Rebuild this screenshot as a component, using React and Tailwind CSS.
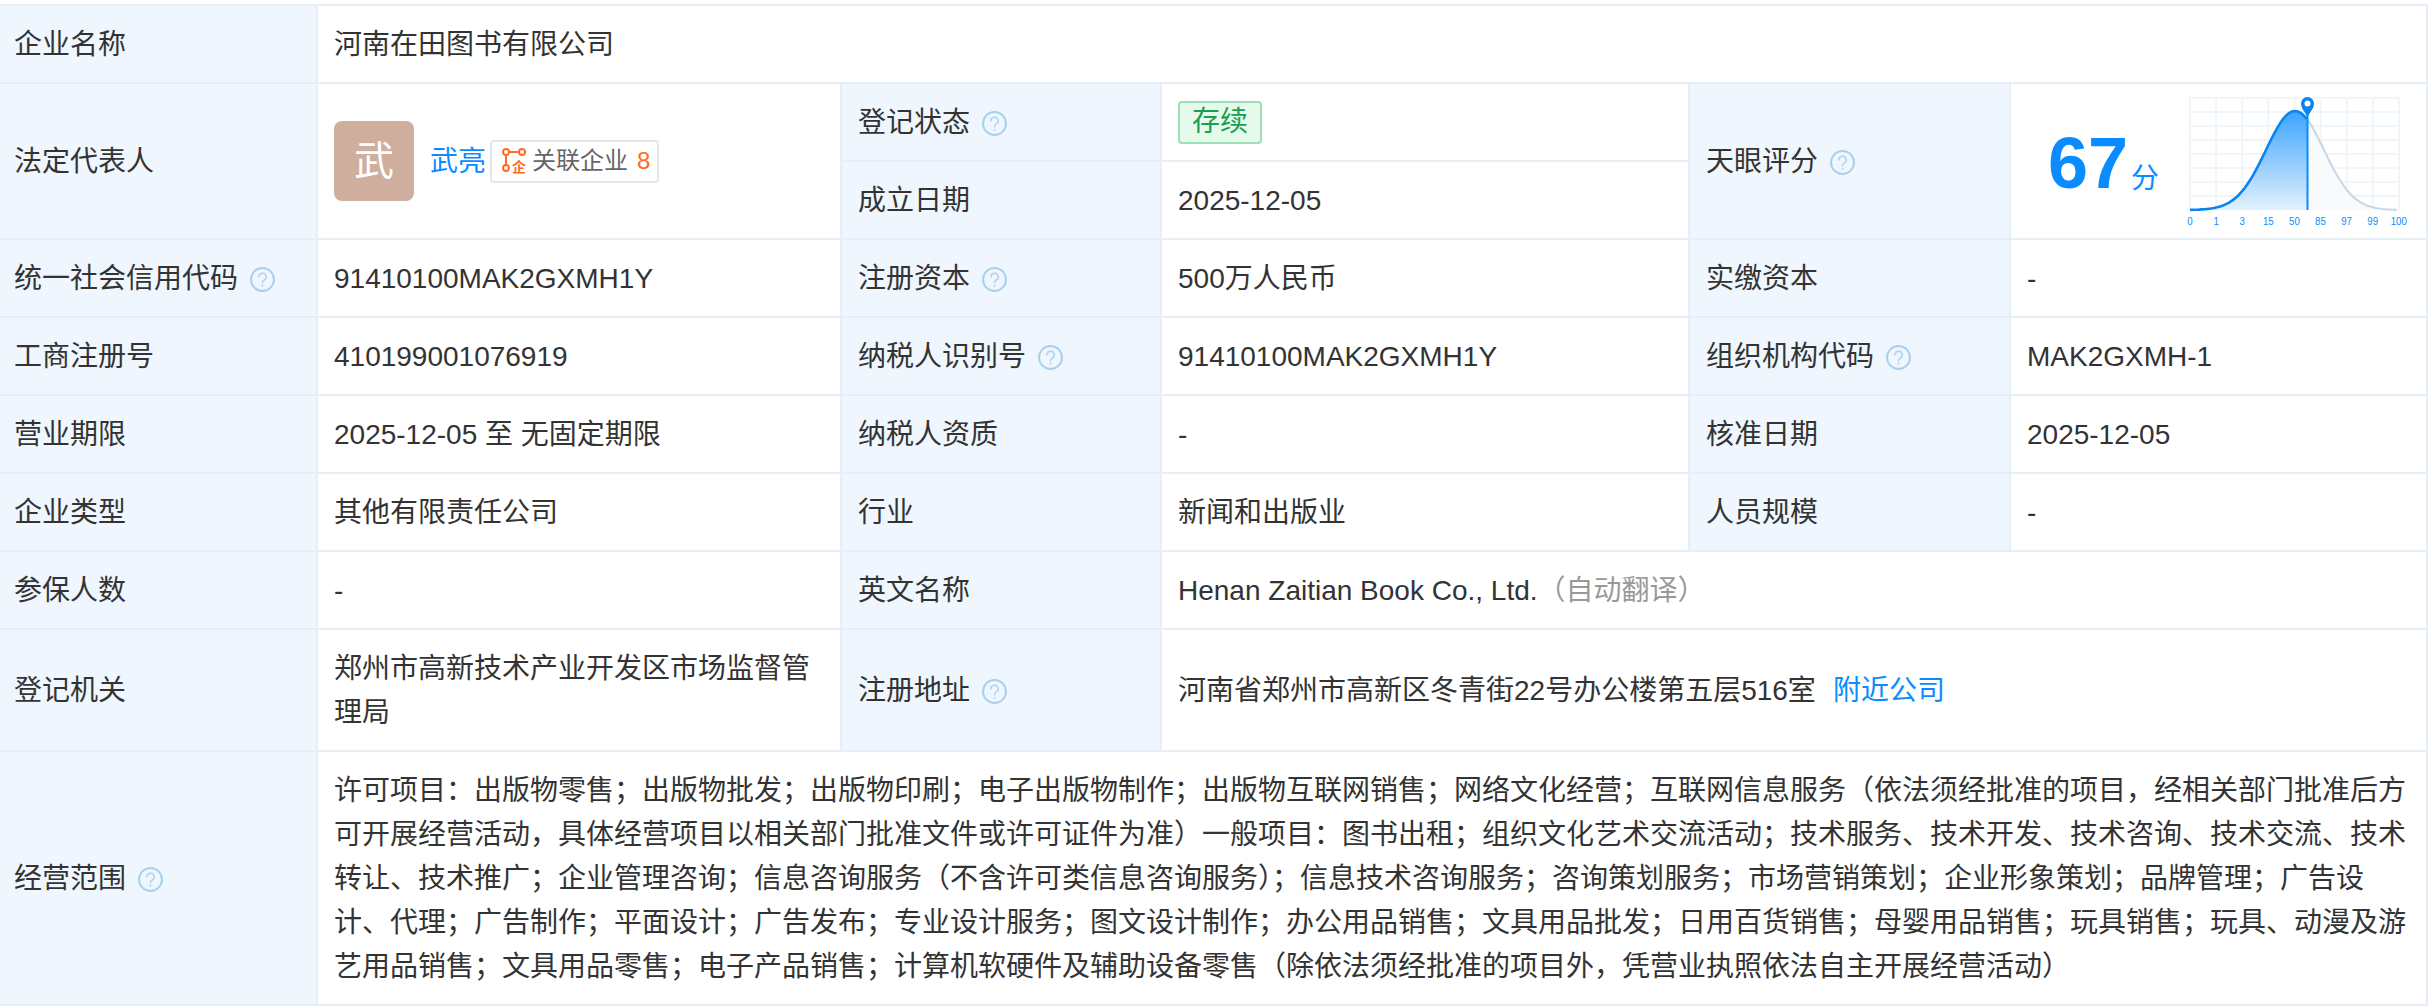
import React from "react";

const curve = [];
for (let x = 7; x <= 216; x += 3) {
  const d = x - 112;
  curve.push([x, 116 - 99 * Math.exp(-(d * d) / (2 * 29 * 29))]);
}
const toPath = (pts) => pts.map((p, i) => `${i ? "L" : "M"}${p[0]} ${p[1].toFixed(1)}`).join(" ");
const cut = 124.5;
const leftPts = curve.filter((p) => p[0] <= cut);
const rightPts = curve.filter((p) => p[0] >= leftPts[leftPts.length - 1][0]);
const ticks = ["0", "1", "3", "15", "50", "85", "97", "99", "100"];

function Help() {
  return (
    <svg width="25" height="25" viewBox="0 0 25 25" fill="none" className="shrink-0 inline-block ml-3">
      <circle cx="12.5" cy="12.5" r="11.5" stroke="#a9d0ec" strokeWidth="2" />
      <path d="M8.8 10a3.7 3.7 0 1 1 5.6 3.1c-1.3.8-1.9 1.3-1.9 2.6" stroke="#b8d6ee" strokeWidth="1.7" strokeLinecap="round" />
      <circle cx="12.5" cy="18.8" r="1.1" fill="#b8d6ee" />
    </svg>
  );
}

function Label({ children, help, rowSpan }) {
  return (
    <td rowSpan={rowSpan} className="bg-[#eff6fd] border-2 border-[#e6eff7] px-4 pt-[2px] align-middle">
      <div className="flex items-center">
        {children}
        {help && <Help />}
      </div>
    </td>
  );
}

function Value({ children, colSpan, rowSpan }) {
  return (
    <td colSpan={colSpan} rowSpan={rowSpan} className="border-2 border-[#e6eff7] px-4 pt-[17px] pb-[15px] align-middle">
      {children}
    </td>
  );
}

function ScoreChart() {
  return (
    <svg width="230" height="136" viewBox="0 0 230 136" className="mt-[2px] shrink-0">
      <defs>
        <linearGradient id="fillBlue" x1="0" y1="0" x2="0" y2="1">
          <stop offset="0" stopColor="#3ba4ff" />
          <stop offset="1" stopColor="#e3f1fd" />
        </linearGradient>
      </defs>
      {[7, 33.1, 59.3, 85.4, 111.5, 137.6, 163.8, 189.9, 216].map((x) => (
        <line key={x} x1={x} x2={x} y1="4" y2="116" stroke="#f0f5fa" strokeWidth="2" />
      ))}
      {[4, 18, 32, 46, 60, 74, 88, 102].map((y) => (
        <line key={y} x1="7" x2="216" y1={y} y2={y} stroke="#f0f5fa" strokeWidth="2" />
      ))}
      <path d={`${toPath(rightPts)} L216 116 L${rightPts[0][0]} 116 Z`} fill="#f9fafb" />
      <path d={`${toPath(leftPts)} L${leftPts[leftPts.length - 1][0]} 116 L7 116 Z`} fill="url(#fillBlue)" />
      <path d={toPath(rightPts)} fill="none" stroke="#c5d8e8" strokeWidth="2" />
      <path d={toPath(leftPts)} fill="none" stroke="#0a84f0" strokeWidth="2.6" />
      <line x1="124.5" x2="124.5" y1="20" y2="116" stroke="#0a8bff" strokeWidth="2" />
      <path d="M124.5 23 C122 18 118 14.5 118 9.5 a6.5 6.5 0 0 1 13 0 C131 14.5 127 18 124.5 23 Z" fill="#0a84f0" />
      <circle cx="124.5" cy="9.5" r="3" fill="#fff" />
      {ticks.map((t, i) => (
        <text
          key={t}
          x={7 + i * 26.1}
          y="131"
          textAnchor="middle"
          fontSize="11.5"
          fill="#0a8bff"
          textLength={t.length * 5.4}
          lengthAdjust="spacingAndGlyphs"
        >
          {t}
        </text>
      ))}
    </svg>
  );
}

function GroupIcon() {
  return (
    <svg width="26" height="26" viewBox="0 0 26 26" fill="none" className="shrink-0">
      <circle cx="4" cy="4" r="3" stroke="#ff6a24" strokeWidth="2" />
      <circle cx="20" cy="4" r="3" stroke="#ff6a24" strokeWidth="2" />
      <circle cx="4" cy="20" r="3" stroke="#ff6a24" strokeWidth="2" />
      <path d="M7 4h10M4 7v10" stroke="#ff6a24" strokeWidth="2" />
      <text x="17" y="24" textAnchor="middle" fontSize="14" fontWeight="700" fill="#ff6a24">
        企
      </text>
    </svg>
  );
}

export default function App() {
  return (
    <div className="min-h-screen bg-white pt-1 font-['Liberation_Sans','Noto_Sans_CJK_SC',sans-serif] text-[28px] leading-[44px] text-[#333]">
      <table className="ml-[-4px] w-[2432px] table-fixed border-collapse">
        <colgroup>
          <col className="w-[320px]" />
          <col className="w-[524px]" />
          <col className="w-[320px]" />
          <col className="w-[528px]" />
          <col className="w-[321px]" />
          <col />
        </colgroup>
        <tbody>
          <tr>
            <Label>企业名称</Label>
            <Value colSpan={5}>河南在田图书有限公司</Value>
          </tr>
          <tr className="h-[78px]">
            <Label rowSpan={2}>法定代表人</Label>
            <td rowSpan={2} className="border-2 border-[#e6eff7] px-4 align-middle">
              <div className="flex items-center">
                <div className="flex h-20 w-20 shrink-0 items-center justify-center rounded-lg bg-[#cfae9e] text-[40px] text-white">武</div>
                <span className="ml-[16px] pt-[2px] text-[#0a8bff]">武亮</span>
                <div className="ml-[4px] flex h-[43px] w-[169px] items-center rounded border-2 border-[#e1e7f0] pl-[10px] text-2xl leading-none text-[#666]">
                  <GroupIcon />
                  <span className="ml-[4px]">关联企业</span>
                  <span className="ml-[9px] text-[#ff6a24]">8</span>
                </div>
              </div>
            </td>
            <Label help>登记状态</Label>
            <td className="border-2 border-[#e6eff7] px-4 align-middle">
              <span className="flex h-[43px] w-[84px] items-center justify-center rounded border-2 border-[#9adfb5] bg-[#e6faec] text-[#1a9e50]">存续</span>
            </td>
            <Label rowSpan={2} help>天眼评分</Label>
            <td rowSpan={2} className="border-2 border-[#e6eff7] align-middle">
              <div className="flex items-center pl-[37px]">
                <div className="flex w-[135px] shrink-0 items-baseline pt-[5px] text-[#0a8bff]">
                  <span className="text-[72px] font-bold leading-[72px]">67</span>
                  <span className="ml-[3px]">分</span>
                </div>
                <ScoreChart />
              </div>
            </td>
          </tr>
          <tr className="h-[78px]">
            <Label>成立日期</Label>
            <Value>2025-12-05</Value>
          </tr>
          <tr>
            <Label help>统一社会信用代码</Label>
            <Value>91410100MAK2GXMH1Y</Value>
            <Label help>注册资本</Label>
            <Value>500万人民币</Value>
            <Label>实缴资本</Label>
            <Value>-</Value>
          </tr>
          <tr>
            <Label>工商注册号</Label>
            <Value>410199001076919</Value>
            <Label help>纳税人识别号</Label>
            <Value>91410100MAK2GXMH1Y</Value>
            <Label help>组织机构代码</Label>
            <Value>MAK2GXMH-1</Value>
          </tr>
          <tr>
            <Label>营业期限</Label>
            <Value>2025-12-05 至 无固定期限</Value>
            <Label>纳税人资质</Label>
            <Value>-</Value>
            <Label>核准日期</Label>
            <Value>2025-12-05</Value>
          </tr>
          <tr>
            <Label>企业类型</Label>
            <Value>其他有限责任公司</Value>
            <Label>行业</Label>
            <Value>新闻和出版业</Value>
            <Label>人员规模</Label>
            <Value>-</Value>
          </tr>
          <tr>
            <Label>参保人数</Label>
            <Value>-</Value>
            <Label>英文名称</Label>
            <Value colSpan={3}>
              Henan Zaitian Book Co., Ltd.<span className="text-[#999]">（自动翻译）</span>
            </Value>
          </tr>
          <tr>
            <Label>登记机关</Label>
            <Value>郑州市高新技术产业开发区市场监督管理局</Value>
            <Label help>注册地址</Label>
            <Value colSpan={3}>
              河南省郑州市高新区冬青街22号办公楼第五层516室
              <span className="ml-[17px] text-[#0a8bff]">附近公司</span>
            </Value>
          </tr>
          <tr>
            <Label help>经营范围</Label>
            <Value colSpan={5}>
              许可项目：出版物零售；出版物批发；出版物印刷；电子出版物制作；出版物互联网销售；网络文化经营；互联网信息服务（依法须经批准的项目，经相关部门批准后方可开展经营活动，具体经营项目以相关部门批准文件或许可证件为准）一般项目：图书出租；组织文化艺术交流活动；技术服务、技术开发、技术咨询、技术交流、技术转让、技术推广；企业管理咨询；信息咨询服务（不含许可类信息咨询服务）；信息技术咨询服务；咨询策划服务；市场营销策划；企业形象策划；品牌管理；广告设计、代理；广告制作；平面设计；广告发布；专业设计服务；图文设计制作；办公用品销售；文具用品批发；日用百货销售；母婴用品销售；玩具销售；玩具、动漫及游艺用品销售；文具用品零售；电子产品销售；计算机软硬件及辅助设备零售（除依法须经批准的项目外，凭营业执照依法自主开展经营活动）
            </Value>
          </tr>
        </tbody>
      </table>
    </div>
  );
}
